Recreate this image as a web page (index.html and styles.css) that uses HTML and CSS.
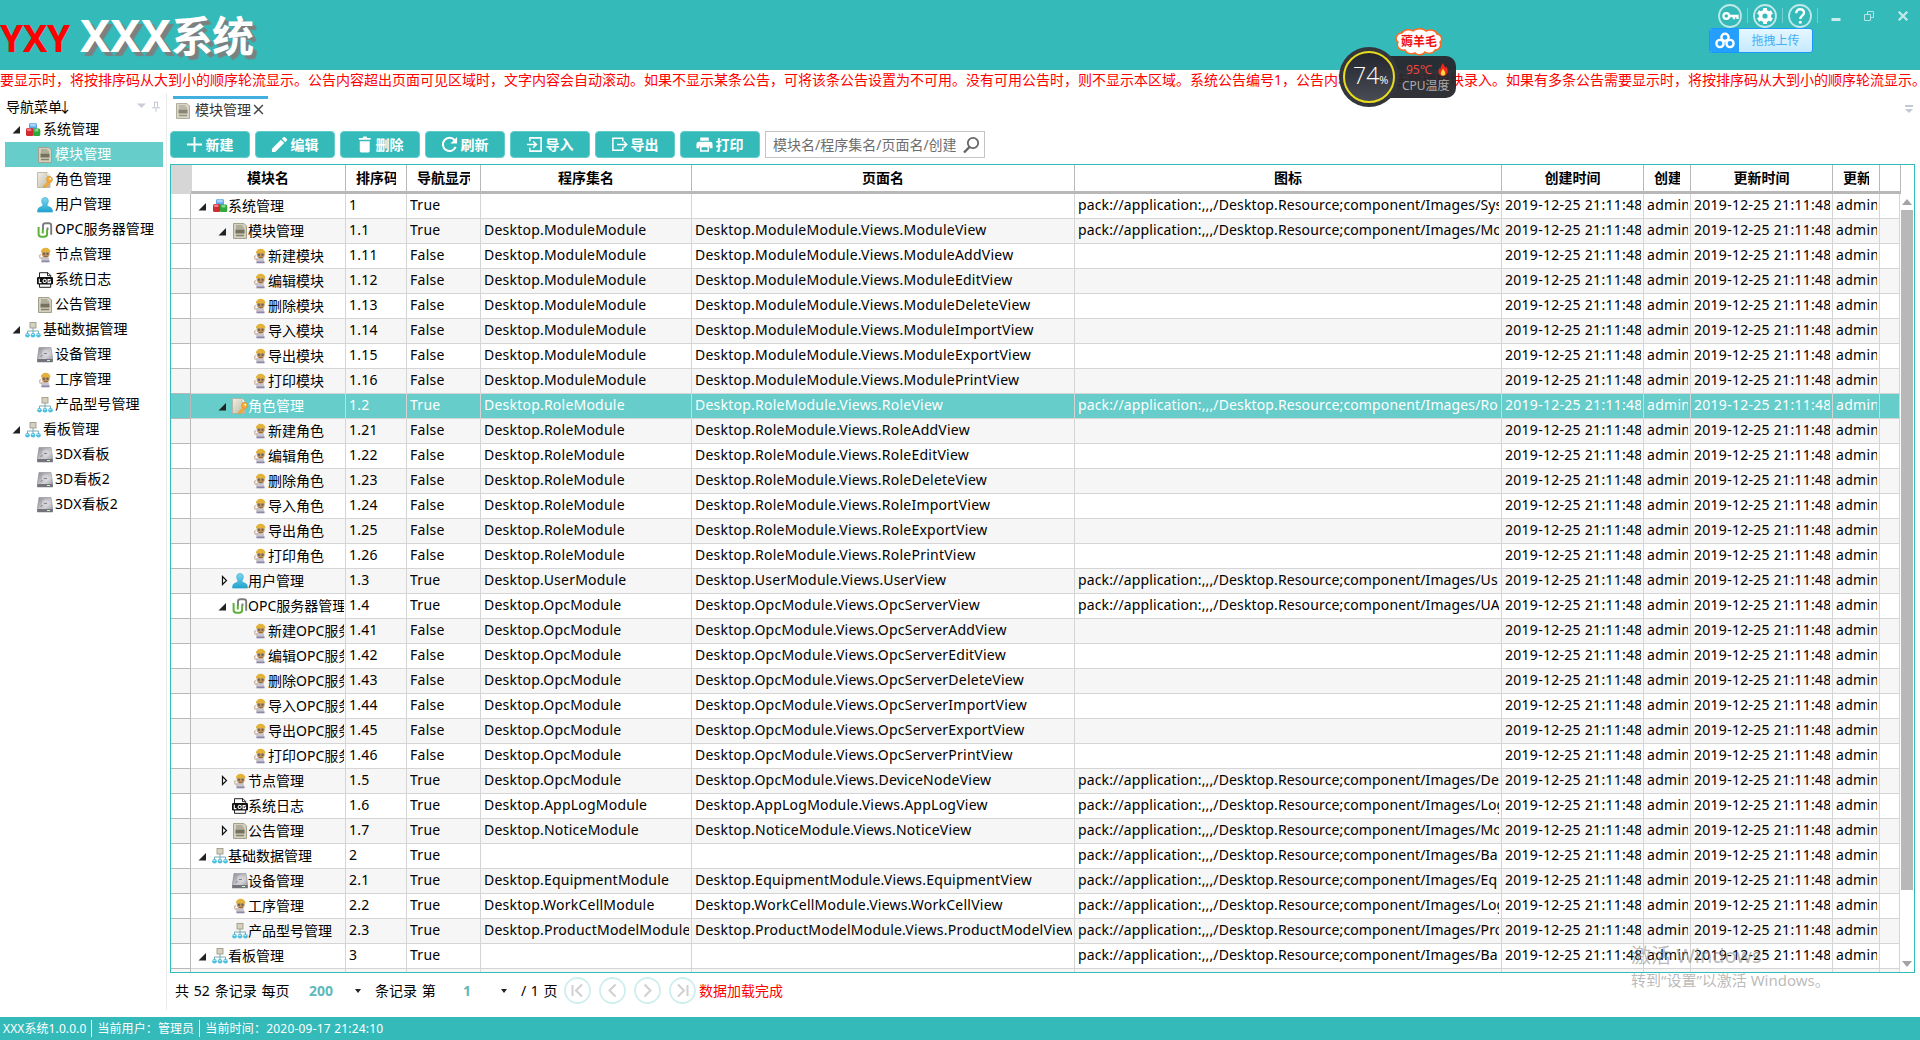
FILE: index.html
```html
<!DOCTYPE html>
<html lang="zh-CN">
<head>
<meta charset="utf-8">
<title>XXX系统</title>
<link rel="stylesheet" href="styles.css">
</head>
<body>
<svg class="defs" width="0" height="0" aria-hidden="true">
  <defs>
    <linearGradient id="g-metal" x1="0" y1="0" x2="1" y2="1"><stop offset="0" stop-color="#8d8d95"/><stop offset=".6" stop-color="#d2d2d6"/><stop offset="1" stop-color="#909098"/></linearGradient>
    <linearGradient id="g-user" x1="0" y1="0" x2="0" y2="1"><stop offset="0" stop-color="#7fd6ec"/><stop offset="1" stop-color="#1fa3cf"/></linearGradient>
    <linearGradient id="g-paper" x1="0" y1="0" x2="1" y2="1"><stop offset="0" stop-color="#f1efe6"/><stop offset="1" stop-color="#bdb8a4"/></linearGradient>
  </defs>
  <symbol id="i-cubes" viewBox="0 0 16 16">
    <rect x="4" y="1" width="8" height="8" rx="1.500" fill="#5da9e8"/><rect x="5" y="1.500" width="6" height="3" rx="1.500" fill="#a6d3f7"/>
    <rect x="1" y="6" width="7.500" height="8" rx="1.500" fill="#cf2c33"/><rect x="2" y="6.500" width="4.500" height="2.500" rx="1" fill="#ee8084"/>
    <rect x="8" y="6.500" width="7.300" height="7.500" rx="1.500" fill="#2eaa3a"/><rect x="9.500" y="7" width="4" height="2.500" rx="1" fill="#83dc83"/>
  </symbol>
  <symbol id="i-module" viewBox="0 0 16 16">
    <path d="M1.500.5H12l2.500 2.500v12.500h-13z" fill="#d3d0bf" stroke="#a3a08b"/>
    <path d="M4 3h6.500M4 5h8" stroke="#8b8873" stroke-width="1"/><path d="M3.500 6.500h9v4h-9z" fill="#75715d"/><path d="M4 12.500h8" stroke="#85826c" stroke-width="1.500"/>
  </symbol>
  <symbol id="i-role" viewBox="0 0 16 16">
    <path d="M.5.500H10L13 4v11.500H.500z" fill="url(#g-paper)" stroke="#b3ae9a" stroke-width=".8"/><path d="M10 .5V4h3" fill="#fff" stroke="#b3ae9a" stroke-width=".6"/>
    <circle cx="12.500" cy="7.500" r="3" fill="#f5ae3a" stroke="#d98e1c" stroke-width=".6"/><circle cx="13.300" cy="6.700" r=".9" fill="#fff"/>
    <path d="M11 9.500L6.500 14v1.500h2l.5-1.500h1.500l2-3z" fill="#f5ae3a" stroke="#d98e1c" stroke-width=".5"/>
  </symbol>
  <symbol id="i-user" viewBox="0 0 16 16">
    <path d="M8 .5c2.200 0 3.500 1.600 3.300 4-.1 1.500-.9 2.700-1.300 3.300.2 1.400 1.200 1.700 2.800 2.300 2 .7 2.700 2.400 2.700 5H.500c0-2.600.7-4.300 2.700-5C4.800 9.500 5.800 9.200 6 7.800 5.600 7.200 4.800 6 4.700 4.500 4.500 2.100 5.800.5 8 .5z" fill="url(#g-user)" stroke="#2aa5cc" stroke-width=".6"/>
  </symbol>
  <symbol id="i-opc" viewBox="0 0 16 16" fill="none">
    <path d="M6 8V3.500C6 2 7 1.200 8.500 1.200h3.200c1.500 0 2.500.8 2.500 2.300v9.300M10.500 8V5.500" stroke="#7b7b7b" stroke-width="1.900"/>
    <path d="M1.600 5v7c0 1.800 1 2.800 2.800 2.800h2.800c1.800 0 2.900-1 2.900-2.800V7.500M5.800 7v4.500" stroke="#5fb13c" stroke-width="2"/>
  </symbol>
  <symbol id="i-worker" viewBox="0 0 16 16">
    <path d="M4 10h7.500l1 4.500h-8z" fill="#c9c5cf"/><path d="M4.500 13.500h8v1.800h-8z" fill="#8e86a8"/><path d="M4 7.500L2.500 8.500l.5 2.500 3 1" fill="none" stroke="#cdb9aa" stroke-width="1.300"/>
    <ellipse cx="8.700" cy="6.500" rx="4" ry="4.100" fill="#c69a63"/><path d="M3.800 5.300C4 2.300 6 .8 8.700.8s4.500 1.500 4.800 4.500z" fill="#e2b23a"/>
    <circle cx="7" cy="6.800" r="1.200" fill="#6d6258"/><circle cx="10.500" cy="6.800" r="1.200" fill="#6d6258"/><path d="M6.800 9.300h4" stroke="#8b5e3b"/>
  </symbol>
  <symbol id="i-log" viewBox="0 0 16 16">
    <path d="M2.500 6V.700H11L13.700 3.500V6M2.500 12v3.300h11.200V12" fill="#fff" stroke="#222"/><path d="M10.500.5v3.200h3.200" fill="none" stroke="#222"/>
    <rect x="0" y="5" width="16" height="7.500" rx="1.200" fill="#111"/>
    <path d="M2.300 6.800v3.800h2.200M13.700 7.600h-2.600v3h2.400V9.200h-1" fill="none" stroke="#fff" stroke-width="1.100"/><circle cx="7.700" cy="8.900" r="1.600" fill="none" stroke="#fff" stroke-width="1.100"/>
  </symbol>
  <symbol id="i-tree" viewBox="0 0 16 16">
    <path d="M8 6v3M2.500 12V9h11v3M8 9v3" fill="none" stroke="#76aab5"/><rect x="5" y=".5" width="6" height="5.500" fill="#d5d1bf" stroke="#a09c88" stroke-width=".9"/>
    <circle cx="2.500" cy="13.300" r="2.300" fill="#4cbede"/><circle cx="8" cy="13.300" r="2.300" fill="#4cbede"/><circle cx="13.500" cy="13.300" r="2.300" fill="#4cbede"/>
    <path d="M1.300 12.600h2M6.800 12.600h2M12.300 12.600h2" stroke="#c8eff9"/>
  </symbol>
  <symbol id="i-disk" viewBox="0 0 16 16">
    <path d="M2 .5h12l1.700 11.500v3H.300v-3z" fill="url(#g-metal)" stroke="#8b8b93" stroke-width=".6"/><path d="M.3 12h15.400v3H.300z" fill="#73737b"/><path d="M10 13.500h3" stroke="#c7f7c2"/>
    <circle cx="8.500" cy="6" r="3.500" fill="#dcdce0" opacity=".6"/><path d="M3.500 9.500l2-1M7 6.500h3" stroke="#85858c"/>
  </symbol>
  <symbol id="i-open" viewBox="0 0 9 9"><path d="M.5 8.500h7.500V1z" fill="#222"/></symbol>
  <symbol id="i-closed" viewBox="0 0 9 12"><path d="M2.500 1.500v8l4-4z" fill="#fff" stroke="#111" stroke-width="1.200"/></symbol>
</svg>

<div class="app">
  <header class="top">
    <h1 class="brand"><span class="brand-mark">YXY</span><span class="brand-name"><span class="brand-latin">XXX</span>系统</span></h1>
    <div class="window-tools">
      <svg class="round" viewBox="0 0 24 24"><circle cx="12" cy="12" r="11" fill="none" stroke="#bfe9e8" stroke-width="1.800"/><circle cx="8.300" cy="12" r="2.900" fill="none" stroke="#fff" stroke-width="2.200"/><path d="M11 12h8.500v3M16 12v3.200" fill="none" stroke="#fff" stroke-width="2.400"/></svg>
      <i class="bar"></i>
      <svg class="round" viewBox="0 0 24 24"><circle cx="12" cy="12" r="11" fill="none" stroke="#bfe9e8" stroke-width="1.800"/><circle cx="12" cy="12" r="4.400" fill="none" stroke="#fff" stroke-width="3.600"/><path d="M12 4v3M12 17v3M5.070 8l2.600 1.500M16.330 14.500l2.600 1.500M5.070 16l2.600-1.500M16.330 9.500l2.600-1.500" stroke="#fff" stroke-width="4"/></svg>
      <i class="bar"></i>
      <svg class="round" viewBox="0 0 24 24"><circle cx="12" cy="12" r="11" fill="none" stroke="#bfe9e8" stroke-width="1.800"/><path d="M8.200 9.200C8.200 6.700 9.800 5.200 12.100 5.200s3.900 1.400 3.900 3.500c0 2.800-3.700 3.200-3.700 6.200" fill="none" stroke="#fff" stroke-width="2.400"/><circle cx="12.300" cy="18.300" r="1.500" fill="#fff"/></svg>
      <i class="bar"></i>
      <svg class="win win-min" viewBox="0 0 10 10"><path d="M.5 8.500h9" stroke="#c9eceb" stroke-width="3"/></svg>
      <svg class="win win-max" viewBox="0 0 10 10"><path d="M.5 3.500h6v6h-6zM3.500 3V.5h6v6H7" fill="none" stroke="#b5e5e4"/></svg>
      <svg class="win win-close" viewBox="0 0 10 10"><path d="M.7.700l8.600 8.600M9.300.700L.700 9.300" stroke="#c3eae9" stroke-width="2.200"/></svg>
    </div>
  </header>

  <div class="notice">要显示时，将按排序码从大到小的顺序轮流显示。公告内容超出页面可见区域时，文字内容会自动滚动。如果不显示某条公告，可将该条公告设置为不可用。没有可用公告时，则不显示本区域。系统公告编号1，公告内容请在公告管理模块录入。如果有多条公告需要显示时，将按排序码从大到小的顺序轮流显示。</div>

  <div class="body">
    <aside class="side">
      <div class="side-head"><span>导航菜单<span class="sort">↓</span></span>
        <svg class="side-tools" viewBox="0 0 24 12"><path d="M1 2.500h9L5.500 7z" fill="#c9cdda"/><path d="M18.500 1v5.500M21.500 1v5.500M18 1.200h4M16 6.800h8M20 7v4" stroke="#c3c8d6" fill="none"/></svg>
      </div>
      <nav class="nav" id="nav"></nav>
    </aside>

    <main class="main">
      <div class="tabs">
        <div class="tab"><svg class="ic"><use href="#i-module"/></svg><span>模块管理</span><svg class="tab-x" viewBox="0 0 10 10"><path d="M1 1l8 8M9 1L1 9" stroke="#444" stroke-width="1.300"/></svg></div>
        <svg class="tabs-menu" viewBox="0 0 8 8"><path d="M0 1h8" stroke="#c3c8d6" stroke-width="2"/><path d="M0 4h8L4 8z" fill="#c3c8d6"/></svg>
      </div>

      <div class="toolbar">
        <button class="btn"><svg viewBox="0 0 18 18"><path d="M9 1v16M1 9h16" stroke="#fff" stroke-width="2"/></svg>新建</button>
        <button class="btn"><svg viewBox="0 0 18 18"><path d="M1 17v-3.500L10.500 4 14 7.500 4.500 17zM11.500 3l1.800-1.800a1 1 0 0 1 1.400 0l2.100 2.100a1 1 0 0 1 0 1.400L15 6.500z" fill="#fff"/></svg>编辑</button>
        <button class="btn"><svg viewBox="0 0 18 18"><path d="M3 2h4l1-1.500h3L12 2h3.500v2H3zM4 5.500h10.500V16a1.500 1.500 0 0 1-1.500 1.500H5.500A1.500 1.500 0 0 1 4 16z" fill="#fff"/></svg>删除</button>
        <button class="btn"><svg viewBox="0 0 18 18"><path d="M15.500 11.500A7 7 0 1 1 14.500 4.500" fill="none" stroke="#fff" stroke-width="2.200"/><path d="M17 1v7h-7z" fill="#fff"/></svg>刷新</button>
        <button class="btn"><svg viewBox="0 0 18 18"><path d="M4 5.500V2h12v14H4v-3.500M1 9h9.500M7.500 5.500L11 9l-3.500 3.500" fill="none" stroke="#fff" stroke-width="1.700"/></svg>导入</button>
        <button class="btn"><svg viewBox="0 0 18 18"><path d="M12.500 5.500V2.500H2v12.500h10.500v-3M6.500 9h10M13.500 5.800L16.700 9l-3.200 3.200" fill="none" stroke="#fff" stroke-width="1.600"/></svg>导出</button>
        <button class="btn"><svg viewBox="0 0 18 18"><path d="M4.500 1.500h9V5h-9zM3 6h12a2.500 2.500 0 0 1 2.500 2.500V13h-3v-2.500h-11V13h-3V8.500A2.500 2.500 0 0 1 3 6z" fill="#fff"/><path d="M5 11h8v5H5z" fill="none" stroke="#fff" stroke-width="1.600"/></svg>打印</button>
        <div class="search"><span>模块名/程序集名/页面名/创建</span><svg viewBox="0 0 18 18"><circle cx="11" cy="7" r="5.200" fill="none" stroke="#666" stroke-width="1.800"/><path d="M7.500 11L2 16.500" stroke="#666" stroke-width="2.400"/></svg></div>
      </div>

      <div class="grid">
        <div class="grid-table">
          <div class="row head">
            <div class="corner"></div><div>模块名</div><div>排序码</div><div>导航显示</div><div>程序集名</div><div>页面名</div><div>图标</div><div>创建时间</div><div>创建</div><div>更新时间</div><div>更新</div><div></div>
          </div>
          <div class="rows" id="rows"></div>
        </div>
        <div class="scroll"><i class="up"></i><i class="thumb"></i><i class="down"></i></div>
      </div>

      <div class="pager">
        <span class="p-a">共 52 条记录 每页</span><b class="p-size">200</b><i class="caret"></i>
        <span class="p-b">条记录 第</span><b class="p-num">1</b><i class="caret"></i><span class="p-c">/ 1 页</span>
        <div class="p-btns">
          <svg viewBox="0 0 27 27"><circle cx="13.500" cy="13.500" r="12.500"/><path d="M8.500 8v11M18 7.500l-6 6 6 6"/></svg>
          <svg viewBox="0 0 27 27"><circle cx="13.500" cy="13.500" r="12.500"/><path d="M16.500 7.500l-6 6 6 6"/></svg>
          <svg viewBox="0 0 27 27"><circle cx="13.500" cy="13.500" r="12.500"/><path d="M10.500 7.500l6 6-6 6"/></svg>
          <svg viewBox="0 0 27 27"><circle cx="13.500" cy="13.500" r="12.500"/><path d="M18.500 8v11M9 7.500l6 6-6 6"/></svg>
        </div>
        <span class="p-msg">数据加载完成</span>
      </div>
    </main>
  </div>

  <footer class="status"><span>XXX系统1.0.0.0</span><span>当前用户：管理员</span><span>当前时间：2020-09-17 21:24:10</span></footer>
</div>

<div class="upload"><span class="upload-logo"><svg viewBox="0 0 20 18"><g fill="none" stroke="#fff" stroke-width="2.400"><circle cx="5" cy="11.500" r="3.600"/><circle cx="15" cy="11.500" r="3.600"/><circle cx="10" cy="5.300" r="3.600"/></g></svg></span><span class="upload-text">拖拽上传</span></div>

<div class="monitor">
  <div class="pill"><span class="temp">95℃</span><span class="cpu">CPU温度</span>
    <svg class="flame" viewBox="0 0 10 13"><path d="M5 0c.5 2.500 2 3.500 3 5 .4-.3.600-.8.700-1.400C10.500 7 10 13 5 13S-.5 8 1.500 5c.3.600.5.900 1 1.200C2.300 3.500 4 2 5 0z" fill="#f2281c"/><path d="M5 5.500c.3 1.500 2.200 2.500 2.200 4.500S6.200 12.700 5 12.700 2.800 11.800 2.800 10 4.700 7 5 5.500z" fill="#ffd83a"/></svg>
  </div>
  <div class="dial"><span>74<small>%</small></span></div>
  <div class="cloud"><svg viewBox="0 0 50 28"><path d="M8 5C10 1 16 1 19 3c3-3 10-3 13 0 4-2 10-1 11 3 5 1 6 6 3 8 2 4-1 8-5 8-2 4-7 4-10 2-2 3-7 4-10 1-4 2-9 0-10-3-5 1-9-3-7-8C0 11 3 5 8 5z" fill="#fff" stroke="#ff6a1f" stroke-width="1.500"/></svg><span>薅羊毛</span></div>
</div>

<div class="watermark"><div class="wm-1">激活 Windows</div><div class="wm-2">转到“设置”以激活 Windows。</div></div>
<script src="app.js"></script>
</body>
</html>
```

FILE: styles.css
```css
* { box-sizing: border-box; }
body {
  margin: 0;
  width: 1920px;
  height: 1040px;
  overflow: hidden;
  position: relative;
  background: #fff;
  color: #000;
  font: 14px/20px "Noto Sans", "Noto Sans CJK SC", sans-serif;
  white-space: nowrap;
}
.defs { position: absolute; }
.app { height: 1040px; display: flex; flex-direction: column; }

/* title bar */
.top { height: 70px; background: #35baba; display: flex; justify-content: space-between; overflow: hidden; }
.brand { margin: 0; display: flex; align-items: baseline; font-weight: 700; line-height: 70px; }
.brand-mark { color: #f00; font-size: 37px; width: 80px; letter-spacing: -.5px; }
.brand-name { color: #fff; font-size: 42px; letter-spacing: -1px; text-shadow: 4px 4px 1px #7c8080; }
.brand-latin { font-size: 45px; letter-spacing: .2px; }
.window-tools { display: flex; align-items: center; height: 31px; padding-right: 12px; }
.round { width: 24px; height: 24px; }
.bar { width: 1px; height: 15px; background: #74cfce; margin: 0 5px; }
.win { width: 10px; height: 10px; }
.win-min { margin-left: 8px; }
.win-max { margin-left: 23px; }
.win-close { margin-left: 24px; }

.notice { height: 23px; line-height: 19px; color: #f00; overflow: hidden; }

.body { flex: 1; display: flex; min-height: 0; }

/* navigation */
.side { width: 167px; border-right: 1px solid #ebebeb; height: 917px; padding-left: 5px; }
.side-head { height: 24px; padding: 4px 6px 0 1px; display: flex; justify-content: space-between; align-items: center; }
.side-tools { width: 24px; height: 12px; }
.sort { margin-left: -4px; }
.nav { width: 158px; letter-spacing: .1px; }
.nav-item { height: 25px; display: flex; align-items: center; }
.nav-item span { margin-top: -1px; }
.nav-item .tw { width: 9px; height: 9px; margin: 0 4px 0 7px; }
.nav-item.child { padding-left: 32px; }
.nav-item .ic { margin-right: 2px; }
.nav-item.on { background: #66cdca; color: #fff; }
.ic { width: 16px; height: 16px; flex: none; }

/* tabs */
.main { flex: 1; padding-left: 3px; display: flex; flex-direction: column; min-width: 0; }
.tabs { height: 38px; padding: 3px 7px 0 3px; display: flex; justify-content: space-between; }
.tab { width: 95px; height: 26px; border-top: 3px solid #41b0de; display: flex; align-items: center; padding-left: 2px; color: #333; }
.tab .ic { margin-right: 4px; opacity: .85; }
.tab span { margin-top: -1px; }
.tab-x { width: 11px; height: 11px; margin-left: 2px; margin-top: -2px; }
.tabs-menu { width: 8px; height: 8px; margin-top: 9px; }

/* toolbar */
.toolbar { display: flex; gap: 5px; height: 27px; }
.btn { width: 80px; height: 27px; border: 1px solid #63cbca; border-radius: 4px; background: #35baba; color: #fff; font: 700 14px/20px "Noto Sans", "Noto Sans CJK SC", sans-serif; padding: 0 1px 0 0; display: flex; align-items: center; justify-content: center; gap: 3px; }
.btn svg { width: 17px; height: 17px; }
.search { width: 220px; border: 1px solid #c4c4c4; display: flex; align-items: center; justify-content: space-between; padding: 0 4px 0 7px; color: #6d6d6d; }
.search span { width: 183px; overflow: hidden; }
.search svg { width: 18px; height: 18px; }

/* tree grid */
.grid { margin-top: 6px; width: 1745px; height: 809px; border: 1px solid #35baba; display: flex; overflow: hidden; }
.grid-table { width: 1729px; }
.row { display: grid; grid-template-columns: 20px 155px 61px 74px 211px 383px 427px 142px 47px 142px 47px 20px; height: 25px; background: #fff; letter-spacing: .28px; }
.row > div { border-right: 1px solid #d5d5d5; border-bottom: 1px solid #d5d5d5; padding: 0 2px 0 3px; overflow: clip; overflow-clip-margin: content-box; line-height: 22px; }
.row > div:first-child { border-color: #b8b8b8; }
.rows .row > div:nth-child(5) { letter-spacing: .22px; }
.rows .row > div:nth-child(6) { letter-spacing: .24px; }
.rows .row > div:nth-child(7) { letter-spacing: .13px; }
.rows .row:nth-child(even) { background: #f6f6f6; }
.rows .row.on { background: #66cdca; color: #fff; }
.rows { height: 778px; overflow: hidden; }
.row.head { height: 29px; font-weight: 700; letter-spacing: 0; }
.row.head > div { border-right-color: #b8b8b8; border-bottom: 3px solid #b8b8b8; padding: 0 10px; text-align: center; line-height: 25px; }
.row.head > .corner { background: #d6d6d6; border-color: #d6d6d6; }
.row .name { display: flex; align-items: center; padding: 0 1px 0 0; letter-spacing: 0; }
.name .tw { width: 21px; height: 12px; flex: none; display: flex; align-items: center; }
.name .tw svg { width: 9px; height: 9px; margin-left: 7px; }
.name .tw svg.shut { height: 12px; margin-left: 9px; }
.name span:last-child { line-height: 22px; margin-top: -1px; }
.d1 { margin-left: 20px; }
.d2 { margin-left: 40px; }

.scroll { width: 14px; display: flex; flex-direction: column; align-items: center; padding-top: 34px; }
.up, .down { border: 5px solid transparent; width: 0; height: 0; }
.up { border-top: 0; border-bottom: 6px solid #a3a3a3; }
.down { border-bottom: 0; border-top: 6px solid #a3a3a3; margin-top: 71px; }
.thumb { width: 12px; height: 680px; background: #b8b8b8; margin-top: 5px; }

/* pager */
.pager { height: 35px; display: flex; align-items: center; padding: 0 0 0 5px; }
.pager b { color: #5fb8b9; }
.p-a { width: 134px; word-spacing: 1.200px; }
.p-size { width: 46px; }
.caret { border: 3px solid transparent; border-top: 4px solid #222; border-bottom: 0; width: 6px; }
.p-b { width: 88px; margin-left: 14px; word-spacing: 1px; }
.p-num { width: 38px; }
.p-c { width: 43px; margin-left: 14px; word-spacing: 1px; }
.p-btns { display: flex; gap: 8px; margin-right: 3px; }
.p-btns svg { width: 27px; height: 27px; fill: none; stroke: #d0d0d0; stroke-width: 2; }
.p-btns circle { stroke: #d0eeee; stroke-width: 1.800; }
.p-msg { color: #f00; }

.status { height: 23px; background: #35baba; color: #fff; font-size: 12px; letter-spacing: .1px; display: flex; align-items: center; padding-left: 3px; }
.status span { line-height: 17px; }
.status span + span { border-left: 1px solid #fff; margin-left: 5px; padding-left: 5px; }
.status span:last-child { letter-spacing: .2px; }

/* floating widgets over the window */
.upload { position: absolute; left: 1709px; top: 28px; width: 104px; height: 25px; border: 1px solid #1b97f9; border-radius: 3px; display: flex; background: linear-gradient(#e6f7ff, #c4eaff); overflow: hidden; }
.upload-logo { width: 29px; background: #249ffd; display: flex; align-items: center; justify-content: center; }
.upload-logo svg { width: 20px; height: 18px; }
.upload-text { flex: 1; text-align: center; font-size: 12px; line-height: 23px; color: #45aef5; }
.monitor { position: absolute; left: 1339px; top: 28px; width: 118px; height: 80px; }
.pill { position: absolute; left: 30px; top: 28px; width: 87px; height: 42px; border-radius: 10px; background: linear-gradient(rgba(40, 43, 50, .97), rgba(32, 33, 38, .92)); }
.temp, .cpu { position: absolute; font-size: 12px; line-height: 14px; }
.temp { left: 37px; top: 7px; color: #f0453e; }
.cpu { left: 33px; top: 23px; color: #a9abae; }
.flame { position: absolute; left: 69px; top: 7px; width: 10px; height: 13px; }
.dial { position: absolute; left: 0; top: 19px; width: 60px; height: 60px; border-radius: 50%; background: #33363d; padding: 4px; }
.dial span { display: block; height: 52px; border: 2px solid #e8dc1c; border-radius: 50%; background: linear-gradient(#23262e, #4a4c55); color: #fff; font: 300 23px/44px "Open Sans", sans-serif; padding-left: 8px; }
.dial small { font-size: 11px; font-weight: 400; }
.cloud { position: absolute; left: 55px; top: 0; width: 50px; height: 28px; }
.cloud svg { display: block; }
.cloud span { position: absolute; left: 7px; top: 4px; font: 700 12px/17px "Noto Sans CJK SC", sans-serif; color: #f01010; }
.watermark { position: absolute; left: 1631px; top: 942px; color: rgba(140, 140, 140, .6); }
.wm-1 { font-size: 20px; line-height: 28px; }
.wm-2 { font-size: 15px; line-height: 20px; }
```

FILE: app.js
```js
const use = (id, cls) => `<svg class="${cls}"><use href="#i-${id}"/></svg>`;

const nav = [
  [0, 'cubes', '系统管理'], [1, 'module', '模块管理', 1], [1, 'role', '角色管理'], [1, 'user', '用户管理'],
  [1, 'opc', 'OPC服务器管理'], [1, 'worker', '节点管理'], [1, 'log', '系统日志'], [1, 'module', '公告管理'],
  [0, 'tree', '基础数据管理'], [1, 'disk', '设备管理'], [1, 'worker', '工序管理'], [1, 'tree', '产品型号管理'],
  [0, 'tree', '看板管理'], [1, 'disk', '3DX看板'], [1, 'disk', '3D看板2'], [1, 'disk', '3DX看板2']
];
document.getElementById('nav').innerHTML = nav.map(([d, icon, text, on]) =>
  `<div class="nav-item${d ? ' child' : ''}${on ? ' on' : ''}">${d ? '' : use('open', 'tw')}${use(icon, 'ic')}<span>${text}</span></div>`
).join('');

/* depth, toggle, icon, name, order, assembly, view, image */
const data = [[0, 'open', 'cubes', '系统管理', '1', '', '', 'Sys']];
const verbs = [['新建', 'Add'], ['编辑', 'Edit'], ['删除', 'Delete'], ['导入', 'Import'], ['导出', 'Export'], ['打印', 'Print']];
const group = (icon, title, noun, order, mod, view, image) => {
  data.push([1, 'open', icon, title, order, mod, view, image]);
  verbs.forEach(([cn, en], i) => data.push([2, '', 'worker', cn + noun, order + (i + 1), mod, view + en, '']));
};
group('module', '模块管理', '模块', '1.1', 'Module', 'Module', 'Mo');
group('role', '角色管理', '角色', '1.2', 'Role', 'Role', 'Ro');
data.push([1, 'closed', 'user', '用户管理', '1.3', 'User', 'User', 'Us']);
group('opc', 'OPC服务器管理', 'OPC服务', '1.4', 'Opc', 'OpcServer', 'UA');
data.push(
  [1, 'closed', 'worker', '节点管理', '1.5', 'Opc', 'DeviceNode', 'De'],
  [1, '', 'log', '系统日志', '1.6', 'AppLog', 'AppLog', 'Log'],
  [1, 'closed', 'module', '公告管理', '1.7', 'Notice', 'Notice', 'Mo'],
  [0, 'open', 'tree', '基础数据管理', '2', '', '', 'Ba'],
  [1, '', 'disk', '设备管理', '2.1', 'Equipment', 'Equipment', 'Eq'],
  [1, '', 'worker', '工序管理', '2.2', 'WorkCell', 'WorkCell', 'Log'],
  [1, '', 'tree', '产品型号管理', '2.3', 'ProductModel', 'ProductModel', 'Pro'],
  [0, 'open', 'tree', '看板管理', '3', '', '', 'Ba']
);
const stamp = '2019-12-25 21:11:48';
const html = data.map(([d, tw, icon, name, order, mod, view, image]) => {
  const cells = [
    order, d === 2 ? 'False' : 'True',
    mod && `Desktop.${mod}Module`,
    view && `Desktop.${mod}Module.Views.${view}View`,
    image && `pack://application:,,,/Desktop.Resource;component/Images/${image}`,
    stamp, 'admin', stamp, 'admin', ''
  ];
  const toggle = `<span class="tw d${d}">${tw ? use(tw, tw === 'closed' ? 'shut' : '') : ''}</span>`;
  return `<div class="row${order === '1.2' ? ' on' : ''}"><div></div><div class="name">${toggle}${use(icon, 'ic')}<span>${name}</span></div>` +
    cells.map((c) => `<div>${c}</div>`).join('') + '</div>';
});
html.push(`<div class="row">${'<div></div>'.repeat(12)}</div>`);
document.getElementById('rows').innerHTML = html.join('');
```
